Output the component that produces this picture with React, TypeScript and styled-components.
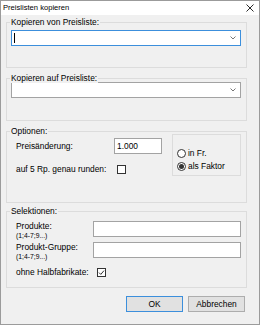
import styled, { createGlobalStyle } from "styled-components";

const GlobalStyle = createGlobalStyle`
  html, body {
    margin: 0;
    padding: 0;
    background: #ffffff;
  }
  body {
    font-family: "Liberation Sans", Arial, sans-serif;
    font-size: 8.4px;
    color: #000;
  }
`;

const Window = styled.div`
  width: 260px;
  height: 325px;
  box-sizing: border-box;
  border: 1px solid #9b9b9b;
  background: #f0f0f0;
  display: flex;
  flex-direction: column;
`;

const TitleBar = styled.div`
  height: 14px;
  flex-shrink: 0;
  background: #fff;
  display: flex;
  align-items: center;
  justify-content: space-between;
  padding: 0 5px 1px 2px;
  box-sizing: border-box;
  font-size: 7.6px;
`;

const CloseIcon = styled.svg`
  width: 8px;
  height: 8px;
  display: block;
`;

const Body = styled.div`
  padding: 7px 12px 0 5px;
  display: flex;
  flex-direction: column;
`;

const GroupBox = styled.div<{ $h: number; $pad: string; $mb: number }>`
  position: relative;
  box-sizing: border-box;
  border: 1px solid #dcdcdc;
  height: ${(p) => p.$h}px;
  padding: ${(p) => p.$pad};
  margin-bottom: ${(p) => p.$mb}px;
`;

const Legend = styled.span`
  position: absolute;
  top: -6px;
  left: 3px;
  padding: 0 1px;
  line-height: 10px;
  background: #f0f0f0;
  white-space: nowrap;
`;

const Combo = styled.div<{ $focused?: boolean }>`
  height: 16px;
  box-sizing: border-box;
  border: 1px solid ${(p) => (p.$focused ? "#3c8fdc" : "#a3a3a3")};
  background: #fff;
  display: flex;
  align-items: center;
  justify-content: space-between;
  padding: 0 4px 0 2px;
`;

const Caret = styled.span`
  width: 1px;
  height: 10px;
  background: #000;
`;

const Chevron = styled.svg`
  width: 6px;
  height: 4px;
  display: block;
  margin-left: auto;
`;

const OptionsLayout = styled.div`
  display: flex;
  align-items: flex-start;
`;

const FieldColumn = styled.div`
  display: flex;
  flex-direction: column;
`;

const FieldRow = styled.div<{ $mt: number; $align?: string }>`
  display: flex;
  align-items: ${(p) => p.$align ?? "center"};
  margin-top: ${(p) => p.$mt}px;
  min-height: 16px;
`;

const FieldLabel = styled.div<{ $w: number }>`
  width: ${(p) => p.$w}px;
  flex-shrink: 0;
  line-height: 10px;
  white-space: nowrap;
`;

const Hint = styled.div`
  font-size: 6.8px;
  line-height: 10px;
`;

const TextBox = styled.div<{ $w?: number }>`
  ${(p) => (p.$w ? `width: ${p.$w}px;` : "flex: 1;")}
  height: 16px;
  box-sizing: border-box;
  border: 1px solid #a3a3a3;
  background: #fff;
  padding: 0 2px;
  display: flex;
  align-items: center;
`;

const CheckBox = styled.div<{ $ml: number }>`
  width: 9px;
  height: 9px;
  box-sizing: border-box;
  border: 1px solid #333;
  background: #fff;
  margin-left: ${(p) => p.$ml}px;
  display: flex;
  align-items: center;
  justify-content: center;
`;

const RadioPanel = styled.div`
  margin-left: auto;
  margin-top: 1px;
  width: 69px;
  height: 42px;
  box-sizing: border-box;
  border: 1px solid #dcdcdc;
  padding: 12px 0 0 4px;
  display: flex;
  flex-direction: column;
  gap: 1px;
`;

const RadioRow = styled.div`
  display: flex;
  align-items: center;
  height: 12px;
  gap: 2px;
`;

const RadioCircle = styled.span<{ $checked?: boolean }>`
  width: 9px;
  height: 9px;
  box-sizing: border-box;
  border: 1px solid #333;
  border-radius: 50%;
  background: #fff;
  display: flex;
  align-items: center;
  justify-content: center;
  &::after {
    content: "";
    width: 5px;
    height: 5px;
    border-radius: 50%;
    background: ${(p) => (p.$checked ? "#333" : "transparent")};
  }
`;

const ButtonRow = styled.div`
  display: flex;
  justify-content: flex-end;
  gap: 5px;
  margin-right: 2px;
`;

const Button = styled.button<{ $primary?: boolean }>`
  width: 57px;
  height: 16px;
  box-sizing: border-box;
  padding: 0;
  border: 1px solid ${(p) => (p.$primary ? "#3c8fdc" : "#adadad")};
  background: #e1e1e1;
  font-family: inherit;
  font-size: 8.4px;
  color: #000;
`;

const Check = () => (
  <svg width="7" height="7" viewBox="0 0 7 7">
    <path d="M1 3.6 L2.8 5.4 L6 1.6" fill="none" stroke="#333" strokeWidth="1" />
  </svg>
);

export default function App() {
  return (
    <>
      <GlobalStyle />
      <Window>
        <TitleBar>
          <span>Preislisten kopieren</span>
          <CloseIcon viewBox="0 0 8 8">
            <path d="M0.5 0.5 L7.5 7.5 M7.5 0.5 L0.5 7.5" stroke="#111" strokeWidth="0.9" />
          </CloseIcon>
        </TitleBar>
        <Body>
          <GroupBox $h={46} $pad="7px 5px 0 4px" $mb={10}>
            <Legend>Kopieren von Preisliste:</Legend>
            <Combo $focused>
              <Caret />
              <Chevron viewBox="0 0 6 4">
                <path d="M0.5 0.5 L3 3 L5.5 0.5" fill="none" stroke="#666" strokeWidth="0.9" />
              </Chevron>
            </Combo>
          </GroupBox>

          <GroupBox $h={43} $pad="3px 5px 0 4px" $mb={10}>
            <Legend>Kopieren auf Preisliste:</Legend>
            <Combo>
              <Chevron viewBox="0 0 6 4">
                <path d="M0.5 0.5 L3 3 L5.5 0.5" fill="none" stroke="#666" strokeWidth="0.9" />
              </Chevron>
            </Combo>
          </GroupBox>

          <GroupBox $h={72} $pad="1px 5px 0 9px" $mb={8}>
            <Legend>Optionen:</Legend>
            <OptionsLayout>
              <FieldColumn>
                <FieldRow $mt={5}>
                  <FieldLabel $w={98}>Preisänderung:</FieldLabel>
                  <TextBox $w={48}>1.000</TextBox>
                </FieldRow>
                <FieldRow $mt={7}>
                  <FieldLabel $w={98}>auf 5 Rp. genau runden:</FieldLabel>
                  <CheckBox $ml={3} />
                </FieldRow>
              </FieldColumn>
              <RadioPanel>
                <RadioRow>
                  <RadioCircle />
                  <span>in Fr.</span>
                </RadioRow>
                <RadioRow>
                  <RadioCircle $checked />
                  <span>als Faktor</span>
                </RadioRow>
              </RadioPanel>
            </OptionsLayout>
          </GroupBox>

          <GroupBox $h={77} $pad="9px 5px 0 9px" $mb={8}>
            <Legend>Selektionen:</Legend>
            <FieldRow $mt={0} $align="flex-start">
              <FieldLabel $w={77}>
                Produkte:
                <Hint>(1;4-7;9...)</Hint>
              </FieldLabel>
              <TextBox />
            </FieldRow>
            <FieldRow $mt={1} $align="flex-start">
              <FieldLabel $w={77}>
                Produkt-Gruppe:
                <Hint>(1;4-7;9...)</Hint>
              </FieldLabel>
              <TextBox />
            </FieldRow>
            <FieldRow $mt={2}>
              <FieldLabel $w={77}>ohne Halbfabrikate:</FieldLabel>
              <CheckBox $ml={4}>
                <Check />
              </CheckBox>
            </FieldRow>
          </GroupBox>

          <ButtonRow>
            <Button $primary>OK</Button>
            <Button>Abbrechen</Button>
          </ButtonRow>
        </Body>
      </Window>
    </>
  );
}
